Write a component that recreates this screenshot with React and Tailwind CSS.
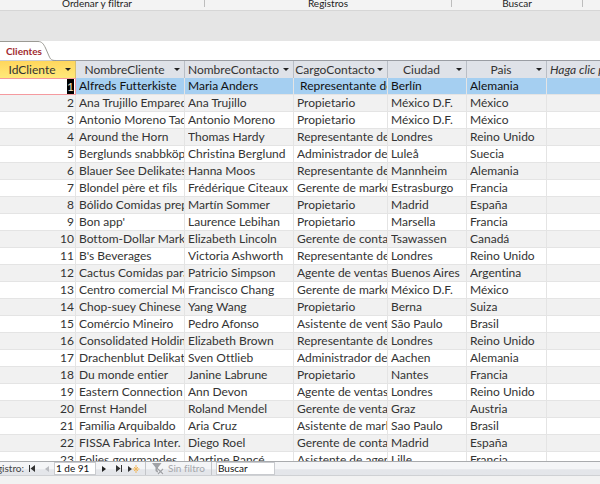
import React from 'react';

const columns = [
  { key: 'id', label: 'IdCliente', width: 'w-[76px]', active: true },
  { key: 'name', label: 'NombreCliente', width: 'w-[109px]' },
  { key: 'contact', label: 'NombreContacto', width: 'w-[109px]' },
  { key: 'role', label: 'CargoContacto', width: 'w-[94px]' },
  { key: 'city', label: 'Ciudad', width: 'w-[79px]' },
  { key: 'country', label: 'Pais', width: 'w-[80px]' },
];

const customers = [
  ['Alfreds Futterkiste', 'Maria Anders', '\u00a0Representante de ventas', 'Berlín', 'Alemania'],
  ['Ana Trujillo Emparedados', 'Ana Trujillo', 'Propietario', 'México D.F.', 'México'],
  ['Antonio Moreno Taquería', 'Antonio Moreno', 'Propietario', 'México D.F.', 'México'],
  ['Around the Horn', 'Thomas Hardy', 'Representante de ventas', 'Londres', 'Reino Unido'],
  ['Berglunds snabbköp', 'Christina Berglund', 'Administrador de pedidos', 'Luleå', 'Suecia'],
  ['Blauer See Delikatessen', 'Hanna Moos', 'Representante de ventas', 'Mannheim', 'Alemania'],
  ['Blondel père et fils', 'Frédérique Citeaux', 'Gerente de marketing', 'Estrasburgo', 'Francia'],
  ['Bólido Comidas preparadas', 'Martín Sommer', 'Propietario', 'Madrid', 'España'],
  ["Bon app'", 'Laurence Lebihan', 'Propietario', 'Marsella', 'Francia'],
  ['Bottom-Dollar Markets', 'Elizabeth Lincoln', 'Gerente de contabilidad', 'Tsawassen', 'Canadá'],
  ["B's Beverages", 'Victoria Ashworth', 'Representante de ventas', 'Londres', 'Reino Unido'],
  ['Cactus Comidas para llevar', 'Patricio Simpson', 'Agente de ventas', 'Buenos Aires', 'Argentina'],
  ['Centro comercial Moctezuma', 'Francisco Chang', 'Gerente de marketing', 'México D.F.', 'México'],
  ['Chop-suey Chinese', 'Yang Wang', 'Propietario', 'Berna', 'Suiza'],
  ['Comércio Mineiro', 'Pedro Afonso', 'Asistente de ventas', 'São Paulo', 'Brasil'],
  ['Consolidated Holdings', 'Elizabeth Brown', 'Representante de ventas', 'Londres', 'Reino Unido'],
  ['Drachenblut Delikatessen', 'Sven Ottlieb', 'Administrador de pedidos', 'Aachen', 'Alemania'],
  ['Du monde entier', 'Janine Labrune', 'Propietario', 'Nantes', 'Francia'],
  ['Eastern Connection', 'Ann Devon', 'Agente de ventas', 'Londres', 'Reino Unido'],
  ['Ernst Handel', 'Roland Mendel', 'Gerente de ventas', 'Graz', 'Austria'],
  ['Familia Arquibaldo', 'Aria Cruz', 'Asistente de marketing', 'Sao Paulo', 'Brasil'],
  ['FISSA Fabrica Inter. Salchichas', 'Diego Roel', 'Gerente de contabilidad', 'Madrid', 'España'],
  ['Folies gourmandes', 'Martine Rancé', 'Asistente de agente de ventas', 'Lille', 'Francia'],
];

const Ribbon = () => (
  <div className="flex h-[11px] shrink-0 border-b border-[#d6d6d6] bg-[#f3f3f3] text-[10px] leading-[7px] text-[#222]">
    <div className="w-[205px] shrink-0 border-r border-[#bdbdbd] pl-[62px] h-[7px] whitespace-nowrap">Ordenar y filtrar</div>
    <div className="w-[247px] shrink-0 border-r border-[#bdbdbd] h-[7px] text-center">Registros</div>
    <div className="w-[131px] shrink-0 border-r border-[#bdbdbd] h-[7px] text-center">Buscar</div>
  </div>
);

const TabStrip = () => (
  <div className="flex h-5 shrink-0 items-end border-b border-[#9a9da3] bg-white">
    <button type="button" className="relative -mb-px h-5 w-14 pl-[6px] text-left text-[10px] font-bold leading-5 text-[#a12a2f]">
      <svg className="absolute left-0 top-0" width="56" height="20" viewBox="0 0 56 20" fill="none">
        <path d="M0 .5H38C42 .5 43.500 3 45.500 7L49 15C50.500 18.500 51.500 19.500 55 19.500H0Z" fill="#fff" />
        <path d="M0 .5H38C42 .5 43.500 3 45.500 7L49 15C50.500 18.500 51.500 19.500 56 19.500" stroke="#9b9a94" />
      </svg>
      <span className="relative">Clientes</span>
    </button>
  </div>
);

const ColumnHeader = ({ label, active }) => (
  <th
    scope="col"
    className={`h-[17px] overflow-hidden border-r p-0 font-normal ${
      active ? 'border-[#d8c070] bg-gradient-to-b from-[#ffd65c] to-[#ffe97a]' : 'border-[#b9bec6] bg-[#dfe2e8]'
    }`}
  >
    <div className="flex items-center pr-[3px]">
      <span className="flex-1 text-center leading-4">{label}</span>
      <button type="button" aria-label={`Filtrar ${label}`} className="w-2 shrink-0">
        <svg width="6" height="3" viewBox="0 0 6 3" className="mx-auto">
          <path d="M0 0h6L3 3z" fill="#222" />
        </svg>
      </button>
    </div>
  </th>
);

const Row = ({ id, values, selected }) => {
  const cell = 'h-[17px] overflow-hidden whitespace-nowrap border-b border-r border-[#e4e4e4] py-0 pl-[3px] pr-0 leading-4';
  const tone = selected ? 'bg-[#a5cff1] text-[#111]' : id % 2 ? 'bg-white' : 'bg-[#f1f1f1]';

  return (
    <tr className={tone}>
      {selected ? (
        <td className="h-[17px] border border-l-0 border-[#f59a9f] bg-white p-0 pr-px text-right leading-[15px]">
          <span className="inline-block bg-black text-[#f3e3c3]">{id}</span>
        </td>
      ) : (
        <td className="h-[17px] border-b border-r border-[#e4e4e4] p-0 pr-px text-right leading-4">{id}</td>
      )}
      {values.map((value, i) => (
        <td key={i} className={cell}>
          <div className="overflow-hidden">{value}</div>
        </td>
      ))}
      <td className="h-[17px] border-b border-[#e4e4e4] p-0" />
    </tr>
  );
};

const NavButton = ({ label, disabled, children }) => (
  <button type="button" aria-label={label} disabled={disabled} className="flex h-[13px] w-[15px] shrink-0 items-center justify-center">
    {children}
  </button>
);

const RecordBar = () => (
  <div className="flex h-[15px] shrink-0 items-center overflow-hidden border-b border-t border-b-[#cfd1d4] border-t-[#a9abae] bg-gradient-to-b from-[#f4f5f7] from-50% to-[#e4e6ea] to-60% text-[10px] text-[#444]">
    <label htmlFor="record" className="flex w-6 shrink-0 justify-end whitespace-nowrap">Registro:</label>
    <NavButton label="Primer registro">
      <svg width="6" height="7" viewBox="0 0 6 7"><path d="M0 0h1v7H0zM6 0v7L1.500 3.500z" fill="#333" /></svg>
    </NavButton>
    <NavButton label="Registro anterior" disabled>
      <svg width="4" height="6" viewBox="0 0 4 6"><path d="M4 0v6L0 3z" fill="#b9bbc0" /></svg>
    </NavButton>
    <input id="record" defaultValue="1 de 91" className="h-[13px] w-[42px] shrink-0 border border-[#c9cbcf] bg-white p-0 px-px text-[10px] text-[#111]" />
    <NavButton label="Registro siguiente">
      <svg width="4" height="6" viewBox="0 0 4 6"><path d="M0 0v6l4-3z" fill="#222" /></svg>
    </NavButton>
    <NavButton label="Último registro">
      <svg width="6" height="7" viewBox="0 0 6 7"><path d="M5 0h1v7H5zM0 0v7l4.500-3.500z" fill="#333" /></svg>
    </NavButton>
    <NavButton label="Nuevo registro">
      <svg width="12" height="8" viewBox="0 0 12 8" className="shrink-0">
        <path d="M0 1v6l4-3z" fill="#333" />
        <path d="M8 0v8M4.500 4h7M6 2l4 4M10 2L6 6" stroke="#f0b860" />
      </svg>
    </NavButton>
    <button type="button" disabled className="ml-1 flex h-[13px] w-[67px] shrink-0 items-center gap-1 border-x border-[#c3c5c9] pl-1.5 text-[#a5a7ab]">
      <svg width="12" height="12" viewBox="0 0 12 12" className="shrink-0">
        <path d="M0 0h9.500L6 4.500V10L3.500 8V4.500z" fill="#a0a2a6" />
        <path d="M6 6l5 5M11 6l-5 5" stroke="#f4f5f7" strokeWidth="2.500" />
        <path d="M6 6l5 5M11 6l-5 5" stroke="#a0a2a6" strokeWidth="1.300" />
      </svg>
      <span className="whitespace-nowrap">Sin filtro</span>
    </button>
    <input aria-label="Buscar" defaultValue="Buscar" className="ml-1 h-[13px] w-[59px] shrink-0 border border-[#c9cbcf] bg-white p-0 px-px text-[10px] text-[#111]" />
  </div>
);

export default function App() {
  return (
    <div className="flex h-screen flex-col overflow-hidden bg-[#f2f2f2] font-['Lato','Noto_Sans',sans-serif] text-[12px] text-[#333] [font-variant-ligatures:none]">
      <Ribbon />
      <div className="h-[30px] shrink-0 bg-[#e5e5e5]" />
      <TabStrip />
      <main className="min-h-0 flex-1 overflow-hidden bg-white">
        <table className="w-full table-fixed border-separate border-spacing-0">
          <colgroup>
            {columns.map((col) => (
              <col key={col.key} className={col.width} />
            ))}
            <col />
          </colgroup>
          <thead>
            <tr>
              {columns.map((col) => (
                <ColumnHeader key={col.key} label={col.label} active={col.active} />
              ))}
              <th scope="col" className="overflow-hidden whitespace-nowrap bg-[#dfe2e8] p-0 pl-[3px] text-left font-normal italic leading-4">
                Haga clic para agregar
              </th>
            </tr>
          </thead>
          <tbody>
            {customers.map((values, i) => (
              <Row key={i} id={i + 1} values={values} selected={i === 0} />
            ))}
          </tbody>
        </table>
      </main>
      <RecordBar />
      <div className="h-2 shrink-0" />
    </div>
  );
}
